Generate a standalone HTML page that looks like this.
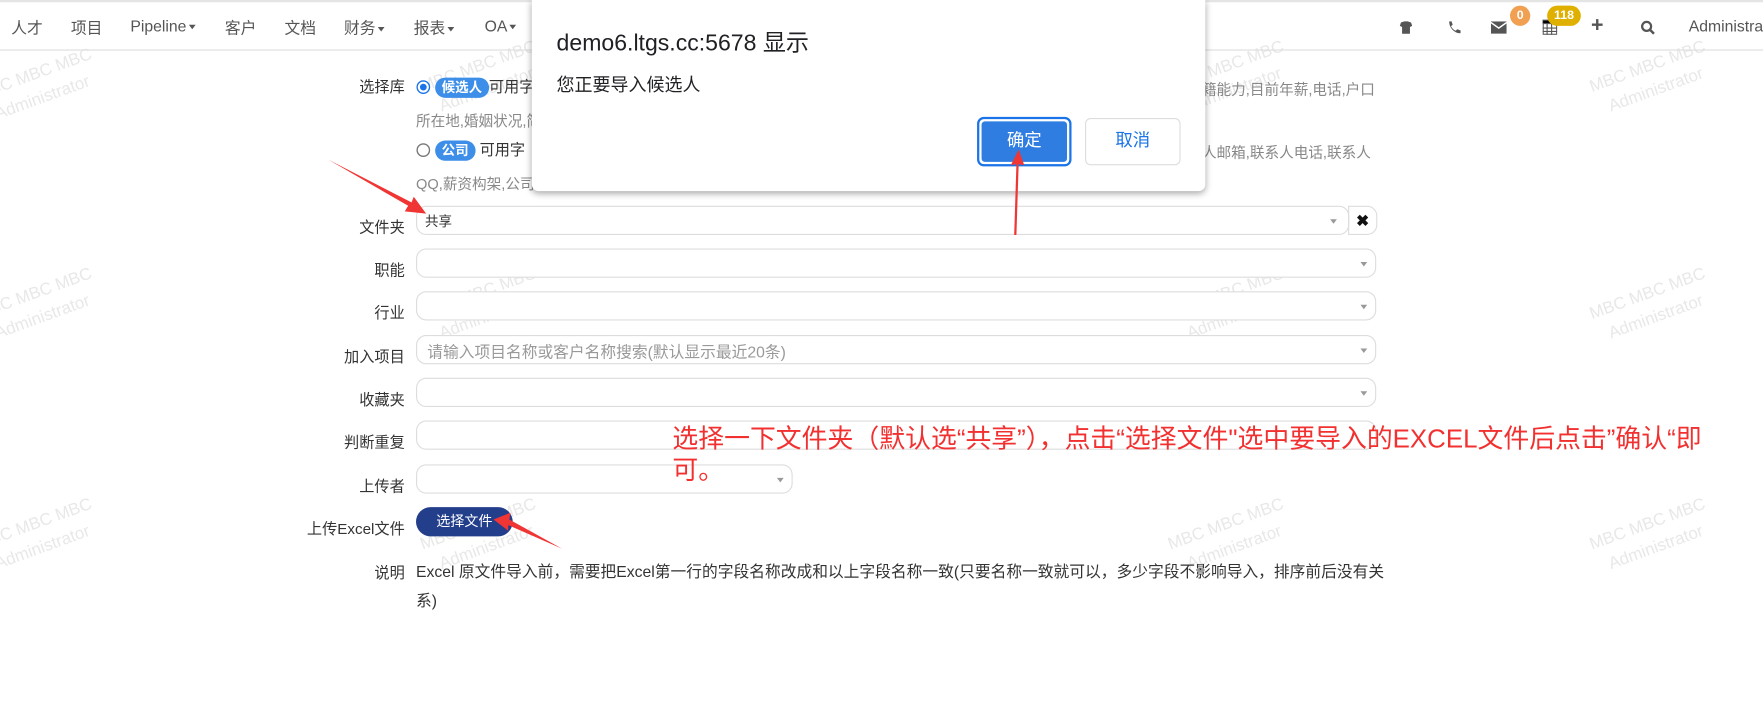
<!DOCTYPE html>
<html><head><meta charset="utf-8"><style>
*{margin:0;padding:0;box-sizing:border-box}
html,body{width:1763px;height:721px;overflow:hidden;background:#fff}
#w{position:absolute;left:0;top:0;width:1568px;height:642px;transform:scale(1.12436);transform-origin:0 0;font-family:"Liberation Sans","Noto Sans CJK SC",sans-serif;color:#333;font-size:13px}
.a{position:absolute;white-space:nowrap}
.nav{position:absolute;left:0;top:0;width:1568px;height:45px;border-top:2px solid #e4e4e4;border-bottom:1px solid #ddd}
.nav span{position:absolute;top:13px;font-size:14px;color:#555}
.car{display:inline-block;border-left:3px solid transparent;border-right:3px solid transparent;border-top:4px solid #555;vertical-align:middle;margin-left:2px}
.lbl{position:absolute;font-size:13.5px;color:#333;text-align:right;width:120px;left:240px}
.inp{position:absolute;left:370px;width:854px;height:26px;border:1px solid #ddd;border-radius:9px;background:#fff}
.tri{position:absolute;right:7px;top:11px;border-left:3px solid transparent;border-right:3px solid transparent;border-top:4px solid #999}
.gray{color:#888;font-size:13px}
.badge{display:inline-block;background:#3c8ee8;color:#fff;font-weight:bold;font-size:12px;border-radius:9px;padding:1px 6px;line-height:16px}
.wm{position:absolute;color:#e8e8e8;font-size:15px;transform:rotate(-20deg);line-height:22px;text-align:center}
</style></head><body><div id="w">
<div class="wm" style="left:-20px;top:55px">MBC MBC MBC<br>Administrator</div>
<div class="wm" style="left:-20px;top:250px">MBC MBC MBC<br>Administrator</div>
<div class="wm" style="left:-20px;top:455px">MBC MBC MBC<br>Administrator</div>
<div class="wm" style="left:375px;top:250px">MBC MBC MBC<br>Administrator</div>
<div class="wm" style="left:375px;top:455px">MBC MBC MBC<br>Administrator</div>
<div class="wm" style="left:375px;top:48px">MBC MBC MBC<br>Administrator</div>
<div class="wm" style="left:1040px;top:48px">MBC MBC MBC<br>Administrator</div>
<div class="wm" style="left:1040px;top:250px">MBC MBC MBC<br>Administrator</div>
<div class="wm" style="left:1040px;top:455px">MBC MBC MBC<br>Administrator</div>
<div class="wm" style="left:1415px;top:48px">MBC MBC MBC<br>Administrator</div>
<div class="wm" style="left:1415px;top:250px">MBC MBC MBC<br>Administrator</div>
<div class="wm" style="left:1415px;top:455px">MBC MBC MBC<br>Administrator</div>

<div class="nav">
<span style="left:10px">人才</span><span style="left:63px">项目</span><span style="left:116px">Pipeline<i class="car"></i></span><span style="left:200px">客户</span><span style="left:253px">文档</span><span style="left:306px">财务<i class="car"></i></span><span style="left:368px">报表<i class="car"></i></span><span style="left:431px">OA<i class="car"></i></span>
<svg class="a" style="left:1244px;top:16px" width="13" height="13" viewBox="0 0 13 13"><path d="M2 2L5 1h3l3 1 1 3-2 1v6H3V6L1 5z" fill="#555"/></svg>
<svg class="a" style="left:1287px;top:16px" width="13" height="13" viewBox="0 0 13 13"><path d="M2 1l2 0 1 3-1.5 1.2c.8 1.8 2.3 3.3 4.2 4.2L9 8l3 1v2.5c-5 .5-10.5-5-10-10.5z" fill="#555"/></svg>
<svg class="a" style="left:1326px;top:17px" width="14" height="11" viewBox="0 0 14 11"><rect width="14" height="11" fill="#555"/><path d="M0 1l7 5 7-5" stroke="#fff" fill="none" stroke-width="1.3"/></svg>
<div class="a" style="left:1343px;top:3px;width:18px;height:18px;border-radius:9px;background:#f0a050;color:#fff;font-weight:bold;font-size:11px;text-align:center;line-height:18px">0</div>
<svg class="a" style="left:1372px;top:14px" width="13" height="15" viewBox="0 0 13 15"><rect x=".5" y="2.5" width="12" height="12" fill="none" stroke="#555"/><path d="M0 2h13v3H0zM4 5v10M8 5v10M0 9h13M0 12h13" stroke="#555"/></svg>
<div class="a" style="left:1376px;top:3px;width:30px;height:18px;border-radius:9px;background:#e0b000;color:#fff;font-weight:bold;font-size:11px;text-align:center;line-height:18px">118</div>
<div class="a" style="left:1415px;top:10px;font-size:19px;font-weight:bold;color:#555">+</div>
<svg class="a" style="left:1459px;top:16px" width="13" height="13" viewBox="0 0 13 13"><circle cx="5.5" cy="5.5" r="4" fill="none" stroke="#555" stroke-width="2"/><path d="M8.5 8.5l3.5 3.5" stroke="#555" stroke-width="2.2"/></svg>
<span style="left:1502px">Administrator</span>
</div>

<div class="lbl" style="top:66px">选择库</div>
<div class="a" style="left:370px;top:66px;font-size:13.5px"><svg width="13" height="13" style="vertical-align:-2px"><circle cx="6.5" cy="6.5" r="5.5" fill="#fff" stroke="#1a73e8" stroke-width="1.2"/><circle cx="6.5" cy="6.5" r="3" fill="#1a73e8"/></svg> <span class="badge">候选人</span>可用字</div>
<div class="a gray" style="left:1069px;top:69px">籍能力,目前年薪,电话,户口</div>
<div class="a gray" style="left:370px;top:97px">所在地,婚姻状况,简</div>
<div class="a" style="left:370px;top:122px;font-size:13.5px"><svg width="13" height="13" style="vertical-align:-2px"><circle cx="6.5" cy="6.5" r="5.5" fill="#fff" stroke="#777" stroke-width="1.2"/></svg> <span class="badge">公司</span> 可用字</div>
<div class="a gray" style="left:1069px;top:125px">人邮箱,联系人电话,联系人</div>
<div class="a gray" style="left:370px;top:153px">QQ,薪资构架,公司</div>

<div class="lbl" style="top:191px">文件夹</div>
<div class="inp" style="top:183px;width:830px"><span class="a" style="left:7px;top:4px;font-size:12px">共享</span><i class="tri" style="right:10px"></i></div>
<div class="a" style="left:1199px;top:183px;width:26px;height:26px;border:1px solid #ddd;border-radius:0 9px 9px 0;font-weight:bold;font-size:14px;text-align:center;line-height:24px;color:#111">✖</div>
<div class="lbl" style="top:229px">职能</div><div class="inp" style="top:221px"><i class="tri"></i></div>
<div class="lbl" style="top:267px">行业</div><div class="inp" style="top:259px"><i class="tri"></i></div>
<div class="lbl" style="top:306px">加入项目</div><div class="inp" style="top:298px"><span class="a" style="left:9px;top:4px;color:#999;font-size:14px">请输入项目名称或客户名称搜索(默认显示最近20条)</span><i class="tri"></i></div>
<div class="lbl" style="top:344px">收藏夹</div><div class="inp" style="top:336px"><i class="tri"></i></div>
<div class="lbl" style="top:382px">判断重复</div><div class="inp" style="top:374px"></div>
<div class="lbl" style="top:421px">上传者</div><div class="inp" style="top:413px;width:335px"><i class="tri"></i></div>
<div class="lbl" style="top:459px">上传Excel文件</div>
<div class="a" style="left:370px;top:451px;width:86px;height:26px;background:#233e8b;border-radius:13px;color:#fff;font-size:12.5px;text-align:center;line-height:26px">选择文件</div>
<div class="lbl" style="top:498px">说明</div>
<div class="a" style="left:370px;top:498px;font-size:14px;color:#333">Excel 原文件导入前，需要把Excel第一行的字段名称改成和以上字段名称一致(只要名称一致就可以，多少字段不影响导入，排序前后没有关</div>
<div class="a" style="left:370px;top:524px;font-size:14px;color:#333">系)</div>

<div class="a" style="left:598px;top:371px;font-size:23px;color:#f23030">选择一下文件夹（默认选“共享”），点击“选择文件"选中要导入的EXCEL文件后点击”确认“即</div>
<div class="a" style="left:598px;top:399px;font-size:23px;color:#f23030">可。</div>

<div class="a" style="left:473px;top:0;width:599px;height:170px;background:#fff;border-radius:0 0 6px 6px;box-shadow:0 2px 6px rgba(0,0,0,.35)">
<div class="a" style="left:22px;top:21px;font-size:20.5px;color:#202124">demo6.ltgs.cc:5678 显示</div>
<div class="a" style="left:22px;top:62px;font-size:16px;color:#202124">您正要导入候选人</div>
<div class="a" style="left:396px;top:104px;width:84px;height:44px;border:2px solid #1a73e8;border-radius:6px;padding:2px"><div style="background:#2f7de1;height:36px;border-radius:3px;color:#fff;font-size:15.5px;text-align:center;line-height:36px">确定</div></div>
<div class="a" style="left:492px;top:105px;width:85px;height:42px;border:1px solid #ddd;border-radius:5px;color:#1a73e8;font-size:15.5px;text-align:center;line-height:40px">取消</div>
</div>

<svg class="a" style="left:0;top:0" width="1568" height="642">
<g fill="#f03535">
<path d="M292 142L366 180L368 175L379 190L360 188L363 183Z"/>
<path d="M902 209L904 146L899 147L906 133L911 147L906 146L904 209Z"/>
<path d="M500 488L452 467L452 472L439 462L454 456L453 462Z"/>
</g>
</svg>
</div></body></html>
